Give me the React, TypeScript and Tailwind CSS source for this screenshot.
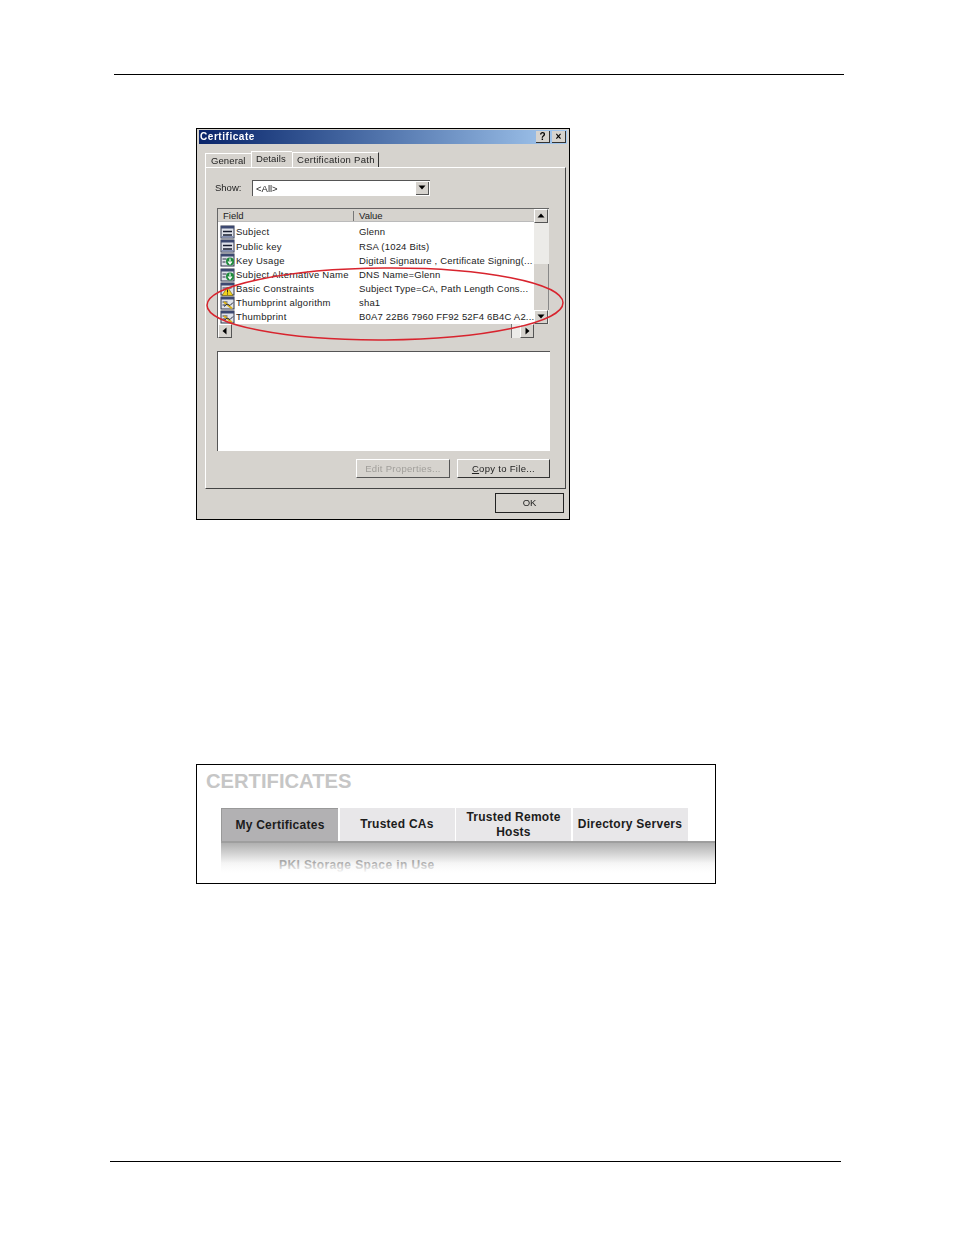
const FONT = "font-['Liberation_Sans',Arial,sans-serif]";

function FieldIcon({ kind }: { kind: "doc" | "key" | "warn" | "pen" }) {
  return (
    <svg width="15" height="14" viewBox="0 0 15 14" className="shrink-0">
      <rect x="1" y="1" width="13" height="12" fill="#dfe2ea" stroke="#2c3348" />
      <rect x="1" y="1" width="13" height="2.5" fill="#3c4870" />
      {kind === "doc" && (
        <>
          <path d="M3 6.5h9M3 10h9" stroke="#161b2e" strokeWidth="1.3" />
          <rect x="1.5" y="11" width="12" height="1.5" fill="#8490b4" />
        </>
      )}
      {kind === "key" && (
        <>
          <path d="M2.5 6h4M2.5 9h3" stroke="#2c3348" />
          <circle cx="10" cy="8.5" r="4" fill="#1d8a3a" />
          <path d="M10 5.5v5M8 8.5l2 2.5 2-2.5" stroke="#fff" strokeWidth="1.2" fill="none" />
        </>
      )}
      {kind === "warn" && (
        <>
          <path d="M2.5 6h9" stroke="#2c3348" />
          <path d="M7.5 5 13 13.5H2Z" fill="#f2d21e" stroke="#6b5a10" strokeWidth="0.6" />
          <path d="M7.5 7.5v3M7.5 11.5v1" stroke="#222" />
        </>
      )}
      {kind === "pen" && (
        <>
          <path d="M2.5 6h5M2.5 9h3" stroke="#2c3348" />
          <path d="M4 6l8 6.5" stroke="#d8b018" strokeWidth="2" />
          <path d="M4 10.5 7 8l3 1.5 3-3" stroke="#20263c" fill="none" />
        </>
      )}
    </svg>
  );
}

function Arrow({ dir }: { dir: "up" | "down" | "left" | "right" }) {
  const points = {
    up: "4,1.5 7.5,5.5 0.5,5.5",
    down: "0.5,1.5 7.5,1.5 4,5.5",
    left: "5.5,0.5 5.5,7.5 1.5,4",
    right: "2.5,0.5 2.5,7.5 6.5,4",
  }[dir];
  return (
    <svg width="8" height="8" viewBox="0 0 8 8">
      <polygon points={points} fill="#000" />
    </svg>
  );
}

function ScrollButton({ dir }: { dir: "up" | "down" | "left" | "right" }) {
  return (
    <div className="w-[14px] h-[14px] shrink-0 flex items-center justify-center bg-[#d6d3ce] border-t border-l border-t-white border-l-white border-r border-b border-r-[#555] border-b-[#555]">
      <Arrow dir={dir} />
    </div>
  );
}

const rows: { icon: "doc" | "key" | "warn" | "pen"; field: string; value: string }[] = [
  { icon: "doc", field: "Subject", value: "Glenn" },
  { icon: "doc", field: "Public key", value: "RSA (1024 Bits)" },
  { icon: "key", field: "Key Usage", value: "Digital Signature , Certificate Signing(..." },
  { icon: "key", field: "Subject Alternative Name", value: "DNS Name=Glenn" },
  { icon: "warn", field: "Basic Constraints", value: "Subject Type=CA, Path Length Cons..." },
  { icon: "pen", field: "Thumbprint algorithm", value: "sha1" },
  { icon: "pen", field: "Thumbprint", value: "B0A7 22B6 7960 FF92 52F4 6B4C A2..." },
];

function CertificateDialog() {
  return (
    <div className={`relative w-[374px] h-[392px] ml-[196px] border border-black bg-[#d6d3ce] text-[#222] text-[9.5px] leading-none ${FONT}`}>
      <div className="blur-[0.45px] h-full">
        {/* title bar */}
        <div className="mx-[2px] mt-[1px] h-[14px] flex items-center justify-between bg-gradient-to-r from-[#0a246a] to-[#a6caf0] pl-[1px] pr-[1px]">
          <span className="text-white font-bold text-[10px] tracking-[0.55px]">Certificate</span>
          <div className="flex gap-[2px]">
            <div className="w-[14px] h-[12px] bg-[#d6d3ce] border-r border-b border-r-[#333] border-b-[#333] text-black font-bold text-[10px] flex items-center justify-center">?</div>
            <div className="w-[14px] h-[12px] bg-[#d6d3ce] border-r border-b border-r-[#333] border-b-[#333] text-black font-bold text-[10px] flex items-center justify-center">×</div>
          </div>
        </div>

        {/* tabs */}
        <div className="mt-[7px] ml-[8px] mr-[4px] h-[16px] flex items-end">
          <div className="w-[46px] h-[14px] pl-[5px] flex items-center border-t border-l border-white tracking-[0.1px]">General</div>
          <div className="w-[41px] h-[16px] pl-[4px] flex items-center border-t border-l border-white bg-[#d6d3ce] pb-[2px] tracking-[0.1px]">Details</div>
          <div className="w-[87px] h-[15px] pl-[4px] flex items-center border-l border-t border-r border-l-white border-t-white border-r-[#333] tracking-[0.3px]">Certification Path</div>
        </div>

        {/* tab panel */}
        <div className="ml-[8px] w-[361px] h-[322px] border-t border-l border-white border-r border-b border-r-[#444] border-b-[#444] pt-[12px] px-[9px]">
          <div className="flex items-center h-[16px]">
            <span className="w-[37px]">Show:</span>
            <div className="w-[178px] h-[16px] flex items-center justify-between bg-white border-t border-l border-[#555] pl-[3px] pr-[1px]">
              <span>&lt;All&gt;</span>
              <div className="w-[13px] h-[13px] bg-[#d6d3ce] border-r border-b border-[#555] flex items-center justify-center">
                <Arrow dir="down" />
              </div>
            </div>
          </div>

          {/* field list */}
          <div className="mt-[12px] ml-[2px] w-[332px] h-[130px] border-t border-l border-[#666] flex flex-col">
            <div className="flex flex-1 min-h-0">
              <div className="flex-1 min-w-0 flex flex-col">
                <div className="h-[13px] flex bg-[#d6d3ce] border-b border-[#bbb] items-center pt-[2px]">
                  <span className="w-[136px] pl-[5px] border-r border-[#777] h-full flex items-center">Field</span>
                  <span className="pl-[5px]">Value</span>
                </div>
                <div className="flex-1 bg-white overflow-hidden pt-[3px]">
                  {rows.map((r) => (
                    <div key={r.field} className="h-[14.2px] flex items-center pl-[2px] whitespace-nowrap">
                      <FieldIcon kind={r.icon} />
                      <span className="w-[124px] shrink-0 pl-[1px] tracking-[0.25px]">{r.field}</span>
                      <span className="tracking-[0.18px]">{r.value}</span>
                    </div>
                  ))}
                </div>
              </div>
              <div className="w-[15px] flex flex-col bg-[#ecebe8]">
                <ScrollButton dir="up" />
                <div className="h-[41px]" />
                <div className="flex-1 bg-[#d6d3ce] border-r border-[#888]" />
                <ScrollButton dir="down" />
              </div>
            </div>
            <div className="h-[14px] flex bg-[#d6d3ce] mr-[15px]">
              <ScrollButton dir="left" />
              <div className="flex-1 border-r border-[#777]" />
              <div className="w-[8px] bg-[#ecebe8]" />
              <ScrollButton dir="right" />
            </div>
          </div>

          {/* detail box */}
          <div className="mt-[13px] ml-[2px] w-[333px] h-[100px] bg-white border-t border-l border-[#555]" />

          <div className="mt-[8px] ml-[2px] w-[333px] flex justify-end gap-[7px]">
            <div className="w-[94px] h-[19px] flex items-center justify-center border border-t-white border-l-white border-r-[#555] border-b-[#555] text-[#a09e9a] tracking-[0.3px]">Edit Properties...</div>
            <div className="w-[93px] h-[19px] flex items-center justify-center border border-t-white border-l-white border-r-[#333] border-b-[#333] tracking-[0.3px]">
              <span><span className="underline">C</span>opy to File...</span>
            </div>
          </div>
        </div>

        <div className="mt-[4px] ml-[298px] w-[69px] h-[20px] flex items-center justify-center border border-[#222]">OK</div>
      </div>

      {/* red marker drawn over the screenshot */}
      <svg width="374" height="392" viewBox="0 0 374 392" className="absolute left-[-1px] top-[-1px] pointer-events-none">
        <ellipse cx="189" cy="176" rx="178" ry="36" fill="none" stroke="#d8242e" strokeWidth="1.5" transform="rotate(-0.4 189 176)" />
      </svg>
    </div>
  );
}

function CertificatesPanel() {
  return (
    <div className={`w-[520px] h-[120px] ml-[196px] border border-black overflow-hidden ${FONT}`}>
      <div className="pl-[9px] pt-[4px] h-[43px] text-[20.2px] leading-[24px] font-bold text-[#c6c6c6]">CERTIFICATES</div>
      <div className="ml-[24px] flex gap-[1.5px] h-[33px] text-[12px] font-bold text-[#1c1c1c] tracking-[0.25px] text-center leading-[15px]">
        <div className="w-[117px] flex items-center justify-center bg-[#b2b1b3] border-t border-l border-[#999]">My Certificates</div>
        <div className="w-[115px] flex items-center justify-center bg-[#e8e7e9]">Trusted CAs</div>
        <div className="w-[115px] flex items-center justify-center bg-[#e8e7e9]">Trusted Remote<br />Hosts</div>
        <div className="w-[115px] flex items-center justify-center bg-[#e8e7e9]">Directory Servers</div>
      </div>
      <div className="relative ml-[24px] h-[42px] border-t-2 border-[#9e9e9e] bg-gradient-to-b from-[#b0b0b0] via-[#f4f4f4] via-50% to-white">
        <div className="pl-[58px] pt-[15px] text-[12px] font-bold text-[#a8a8a8] tracking-[0.4px] leading-[15px] whitespace-nowrap">PKI Storage Space in Use</div>
        <div className="absolute left-0 right-0 top-[19px] h-[11px] bg-gradient-to-b from-white/0 to-white" />
        <div className="absolute left-0 right-0 top-[30px] bottom-0 bg-white" />
      </div>
    </div>
  );
}

export default function App() {
  return (
    <div className="w-[954px] h-[1235px] bg-white pt-[74px]">
      <div className="ml-[114px] w-[730px] h-px bg-black" />
      <div className="mt-[53px]">
        <CertificateDialog />
      </div>
      <div className="mt-[244px]">
        <CertificatesPanel />
      </div>
      <div className="mt-[277px] ml-[110px] w-[731px] h-px bg-black" />
    </div>
  );
}
